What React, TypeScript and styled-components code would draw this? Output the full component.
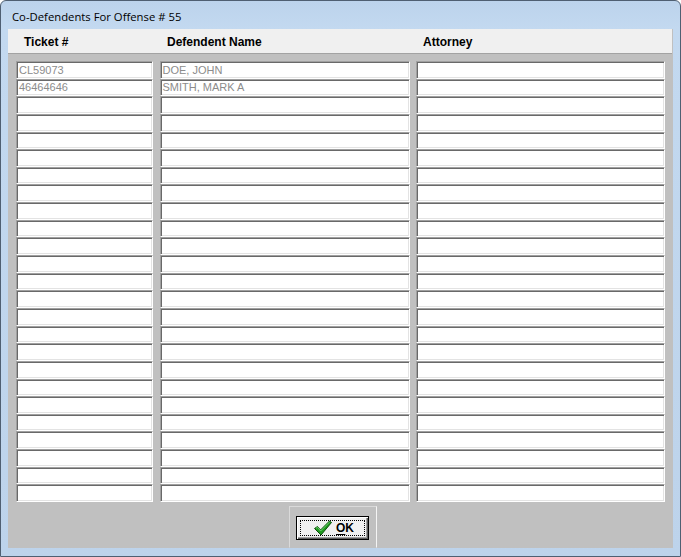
import React from "react";
import styled, { createGlobalStyle } from "styled-components";

const GlobalStyle = createGlobalStyle`
  html, body {
    margin: 0;
    padding: 0;
    background: #ffffff;
  }
`;

interface IRecord {
  ticket: string;
  name: string;
  attorney: string;
}

const records: IRecord[] = [
  { ticket: "CL59073", name: "DOE, JOHN", attorney: "" },
  { ticket: "46464646", name: "SMITH, MARK A", attorney: "" },
];

const ROW_COUNT = 25;

const Window = styled.div`
  box-sizing: border-box;
  width: 681px;
  height: 557px;
  display: flex;
  flex-direction: column;
  border: 1px solid #4f5f72;
  border-radius: 6px 6px 0 0;
  background: linear-gradient(to bottom, #bcd3ec 0px, #c3d9f0 28px, #bdd3eb 100%);
  overflow: hidden;
`;

const TitleBar = styled.div`
  box-sizing: border-box;
  height: 28px;
  display: flex;
  align-items: center;
  padding: 3px 0 0 11px;
  font-family: "Open Sans", "Noto Sans", sans-serif;
  font-size: 11.3px;
  color: #000;
`;

const Client = styled.div`
  flex: 1;
  margin: 0 7px 8px 7px;
  background: #c0c0c0;
  display: flex;
  flex-direction: column;
`;

const Columns = styled.div`
  display: grid;
  grid-template-columns: 137px 250px 249px;
  justify-content: space-between;
  padding: 0 8px;
`;

const HeaderBand = styled(Columns)`
  height: 23px;
  margin-right: 1px;
  padding-top: 1px;
  align-items: center;
  background: #f0f0f0;
  border-bottom: 1px solid #a3a3a3;
`;

const HeaderLabel = styled.div`
  padding-left: 8px;
  font-family: "Liberation Sans", Arial, sans-serif;
  font-size: 12px;
  font-weight: bold;
  color: #000;
`;

const Grid = styled(Columns)`
  margin-top: 7px;
  height: 441px;
  grid-template-rows: repeat(${ROW_COUNT}, 1fr);
`;

const Field = styled.div`
  box-sizing: border-box;
  display: flex;
  align-items: center;
  padding: 0 2px 0 2px;
  background: #ffffff;
  border-style: solid;
  border-width: 1px;
  border-color: #a0a0a0 #ffffff #ffffff #a0a0a0;
  box-shadow: inset 1px 1px 0 #696969, inset -1px -1px 0 #e3e3e3;
  font-family: "Liberation Sans", Arial, sans-serif;
  font-size: 11px;
  color: #8c8c8c;
  white-space: nowrap;
  overflow: hidden;
`;

const Footer = styled.div`
  flex: 1;
  display: flex;
  justify-content: center;
  align-items: flex-end;
`;

const ButtonPanel = styled.div`
  box-sizing: border-box;
  width: 88px;
  height: 42px;
  margin-right: 16px;
  display: flex;
  justify-content: center;
  align-items: center;
  border-style: solid;
  border-width: 1px;
  border-color: #dadada #f4f4f4 #c0c0c0 #dadada;
`;

const OkButton = styled.button`
  position: relative;
  box-sizing: border-box;
  width: 73px;
  height: 24px;
  margin-top: 1px;
  display: flex;
  align-items: center;
  justify-content: center;
  gap: 3px;
  padding: 0 0 0 2px;
  background: #f0f0f0;
  border: 1px solid #000;
  box-shadow: inset 1px 1px 0 #ffffff, inset -1px -1px 0 #5a5a5a, inset -2px -2px 0 #a0a0a0;
  font-family: "Liberation Sans", Arial, sans-serif;
  font-size: 12px;
  font-weight: bold;
  color: #000;

  &::after {
    content: "";
    position: absolute;
    inset: 3px;
    border: 1px dotted #000;
  }

  u {
    text-decoration: underline;
    text-underline-offset: 2px;
  }
`;

const CheckIcon: React.FC = () => (
  <svg width="20" height="16" viewBox="0 0 20 16">
    <path
      d="M1.5 8.5 L4.5 6.5 L7.5 10 L16.5 1 L18.5 2.5 L8 15 Z"
      fill="#1f9a1f"
      stroke="#0d4f0d"
      strokeWidth="1"
      strokeLinejoin="round"
    />
    <path d="M3 8.3 L4.6 7.3 L7.6 11 L16.4 2.2" fill="none" stroke="#6fd06f" strokeWidth="1" />
  </svg>
);

const App: React.FC = () => {
  const rows: IRecord[] = Array.from({ length: ROW_COUNT }, (_, i) =>
    records[i] ? records[i] : { ticket: "", name: "", attorney: "" }
  );

  return (
    <>
      <GlobalStyle />
      <Window>
        <TitleBar>Co-Defendents For Offense # 55</TitleBar>
        <Client>
          <HeaderBand>
            <HeaderLabel>Ticket #</HeaderLabel>
            <HeaderLabel>Defendent Name</HeaderLabel>
            <HeaderLabel>Attorney</HeaderLabel>
          </HeaderBand>
          <Grid>
            {rows.map((row, i) => (
              <React.Fragment key={i}>
                <Field>{row.ticket}</Field>
                <Field>{row.name}</Field>
                <Field>{row.attorney}</Field>
              </React.Fragment>
            ))}
          </Grid>
          <Footer>
            <ButtonPanel>
              <OkButton>
                <CheckIcon />
                <span>
                  <u>O</u>K
                </span>
              </OkButton>
            </ButtonPanel>
          </Footer>
        </Client>
      </Window>
    </>
  );
};

export default App;
